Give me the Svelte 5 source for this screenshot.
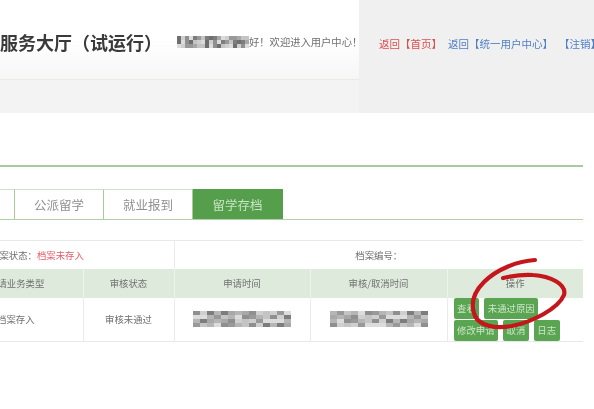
<script>
  // fake mosaic for the blurred out values
  const shades = ['#8f8f8f', '#a8a8a8', '#c4c4c4', '#7d7d7d', '#b5b5b5', '#dcdcdc', '#999999', '#6f6f6f', '#cfcfcf']
  function mosaic(cols, rows, seed) {
    const out = []
    let n = seed
    for (let i = 0; i < cols * rows; i++) {
      n = (n * 31 + 7) % 101
      out.push(shades[n % shades.length])
    }
    return out
  }
  const nameCells = mosaic(18, 3, 5)
  const timeA = mosaic(14, 4, 11)
  const timeB = mosaic(14, 4, 23)
</script>

<div class="page">
  <header>
    <div class="head-left">
      <h1>留学服务大厅（试运行）</h1>
      <div class="welcome">
        <div class="mosaic name">
          {#each nameCells as c}<i style="background:{c}"></i>{/each}
        </div>
        <span>好！欢迎进入用户中心！</span>
      </div>
    </div>
    <div class="head-right">
      <span class="red">返回【首页】</span>
      <span class="blue">返回【统一用户中心】</span>
      <span class="blue">【注销】</span>
    </div>
  </header>

  <main>
    <div class="rule"></div>
    <div class="tabs">
      <div class="tab stub"></div>
      <div class="tab">公派留学</div>
      <div class="tab">就业报到</div>
      <div class="tab active">留学存档</div>
    </div>

    <table>
      <colgroup>
        <col style="width:123px" />
        <col style="width:91px" />
        <col style="width:136px" />
        <col style="width:137px" />
        <col style="width:136px" />
      </colgroup>
      <tbody>
        <tr class="info">
          <td colspan="2" class="left">档案状态：<span class="warn">档案未存入</span></td>
          <td colspan="3">档案编号：</td>
        </tr>
        <tr class="labels">
          <td class="type">申请业务类型</td>
          <td>审核状态</td>
          <td>申请时间</td>
          <td>审核/取消时间</td>
          <td>操作</td>
        </tr>
        <tr class="data">
          <td class="type">档案存入</td>
          <td>审核未通过</td>
          <td>
            <div class="mosaic time">
              {#each timeA as c}<i style="background:{c}"></i>{/each}
            </div>
          </td>
          <td>
            <div class="mosaic time">
              {#each timeB as c}<i style="background:{c}"></i>{/each}
            </div>
          </td>
          <td class="ops">
            <div class="btns">
              <button>查看</button>
              <button>未通过原因</button>
              <button>修改申请</button>
              <button>取消</button>
              <button>日志</button>
            </div>
          </td>
        </tr>
      </tbody>
    </table>
  </main>

  <svg class="scribble" viewBox="0 0 594 409" width="594" height="409" aria-hidden="true">
    <path
      d="M535 260 C518 261 497 269 484 282 C474 292 470 304 475 316 C480 326 495 329 512 326 C532 322 558 309 564 295 C567 284 550 276 533 275 C522 274 512 276 503 278"
      fill="none"
      stroke="#c4161c"
      stroke-width="4.2"
      stroke-linecap="round"
    />
  </svg>
</div>

<style>
  :global(body) {
    margin: 0;
    background: #fff;
    overflow: hidden;
  }
  .page {
    position: relative;
    width: 594px;
    height: 409px;
    overflow: hidden;
    font-family: "Noto Sans CJK SC", "Liberation Sans", sans-serif;
    color: #555;
  }

  header {
    display: flex;
    height: 113px;
    background: #f3f3f3;
    filter: blur(0.4px);
  }
  .head-left {
    width: 359px;
    height: 80px;
    flex: none;
    display: flex;
    align-items: center;
    background: linear-gradient(#fff 0%, #fff 50%, #f6f6f6 100%);
    border-bottom: 1px solid #e9ebe5;
    box-sizing: border-box;
    padding-top: 4px;
  }
  h1 {
    margin: 0 0 0 -36px;
    font-size: 18px;
    font-weight: 700;
    color: #3a3a3a;
    white-space: nowrap;
  }
  .welcome {
    display: flex;
    align-items: center;
    margin-left: 15px;
    font-size: 10.3px;
    color: #707070;
    white-space: nowrap;
  }
  .head-right {
    flex: 1;
    background: #f0f0f1;
    display: flex;
    gap: 6px;
    padding: 36px 0 0 20px;
    font-size: 10.5px;
    white-space: nowrap;
  }
  .red { color: #d9504f; }
  .blue { color: #4f7fc4; }

  .mosaic {
    display: grid;
  }
  .name {
    grid-template-columns: repeat(18, 4px);
    grid-auto-rows: 4px;
  }
  .time {
    grid-template-columns: repeat(14, 7px);
    grid-auto-rows: 4px;
    justify-content: center;
  }

  main {
    padding-top: 52px;
    margin-left: -40px;
    width: 623px;
    filter: blur(0.4px);
  }
  .rule {
    height: 2px;
    background: #a9c99f;
  }
  .tabs {
    display: flex;
    margin-top: 22px;
    height: 31px;
    border-bottom: 1px solid #b3d0aa;
    box-sizing: border-box;
    background: #fff;
  }
  .tab {
    width: 89px;
    height: 30px;
    display: flex;
    align-items: center;
    justify-content: center;
    border-right: 1px solid #a9c99f;
    border-top: 1px solid #cfe0c9;
    font-size: 12.5px;
    color: #8f8f8f;
    box-sizing: border-box;
  }
  .tab.stub {
    width: 55px;
  }
  .tab.active {
    width: 90px;
    background: #559f4c;
    border-color: #559f4c;
    color: #c9e4c4;
  }

  table {
    margin-top: 20px;
    width: 623px;
    table-layout: fixed;
    border-collapse: collapse;
    font-size: 9.4px;
    color: #707070;
    border-top: 1px solid #e8e8e8;
    border-bottom: 1px solid #e8e8e8;
  }
  td {
    padding: 0;
    text-align: center;
    border-left: 1px solid #e9ece8;
  }
  td:first-child { border-left: 0; }
  tr.info { height: 28px; }
  tr.labels {
    height: 29px;
    background: #deebdc;
  }
  tr.labels td { border-left-color: #eef4ec; }
  tr.data { height: 43px; }
  .left {
    text-align: left;
    padding-left: 30px;
  }
  tr.labels .type {
    text-align: left;
    padding-left: 28px;
  }
  tr.data .type {
    text-align: left;
    padding-left: 37px;
  }
  .warn { color: #ea5a66; }

  .btns {
    display: flex;
    flex-wrap: wrap;
    gap: 1px 5px;
    padding-left: 6px;
  }
  button {
    height: 21px;
    padding: 0 3.5px;
    border: 0;
    border-radius: 2px;
    background: #5aa552;
    color: #cde6c9;
    font: inherit;
    font-size: 9.4px;
    white-space: nowrap;
  }

  .scribble {
    position: absolute;
    left: 0;
    top: 0;
    pointer-events: none;
  }
</style>
